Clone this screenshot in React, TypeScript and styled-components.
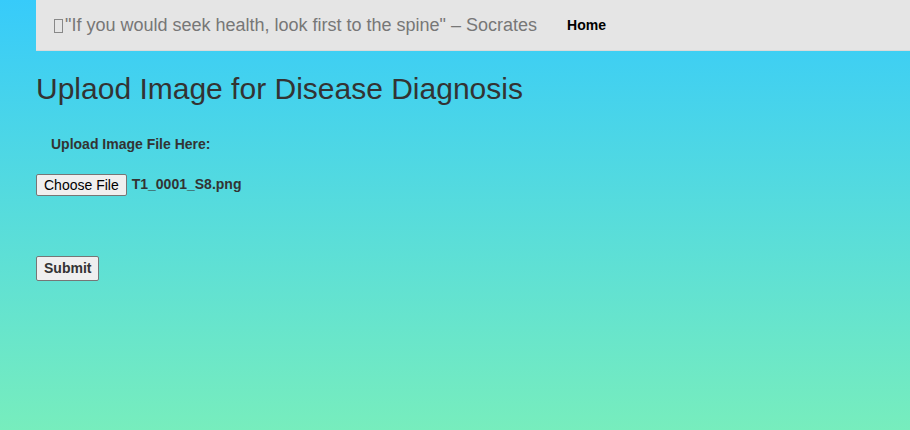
import React from "react";
import styled, { createGlobalStyle } from "styled-components";

const Global = createGlobalStyle`
  html, body { margin: 0; padding: 0; }
  body {
    min-height: 430px;
    font-family: "Liberation Sans", Arial, sans-serif;
    font-size: 14px;
    line-height: 1.42857;
    color: #333;
    background: linear-gradient(to bottom, #37cbfa 0%, #77edbd 100%);
  }
`;

const Page = styled.div`
  min-height: 430px;
  padding-left: 36px;
  box-sizing: border-box;
`;

const Navbar = styled.nav`
  height: 51px;
  background: #e5e5e5;
  border-bottom: 1px solid #dadada;
  box-sizing: border-box;
  display: flex;
  align-items: center;
  padding-left: 18px;
  padding-top: 2px;
`;

const Quote = styled.span`
  font-size: 18px;
  color: #777;
  display: flex;
  align-items: center;
`;

const Tofu = styled.span`
  display: inline-block;
  width: 7px;
  height: 12px;
  border: 1px solid #888;
  margin-right: 2px;
`;

const NavLink = styled.a`
  margin-left: 30px;
  font-size: 14px;
  font-weight: bold;
  color: #000;
  text-decoration: none;
`;

const Title = styled.h2`
  font-size: 30px;
  font-weight: 500;
  line-height: 1.1;
  margin: 21px 0 0;
  color: #333;
`;

const Form = styled.form`
  display: flex;
  flex-direction: column;
  align-items: flex-start;
`;

const Label = styled.label`
  font-size: 14px;
  font-weight: bold;
  padding-left: 15px;
  margin-top: 30px;
`;

const FileRow = styled.div`
  display: flex;
  align-items: center;
  gap: 5px;
  margin-top: 19px;
`;

const NativeButton = styled.button<{ $bold?: boolean }>`
  font-family: "Liberation Sans", Arial, sans-serif;
  font-size: 14px;
  font-weight: ${(p) => (p.$bold ? "bold" : "normal")};
  color: ${(p) => (p.$bold ? "#333" : "#000")};
  background: #efefef;
  border: 1px solid #767676;
  border-radius: 2px;
  padding: ${(p) => (p.$bold ? "3px 7px" : "2px 7px")};
  line-height: ${(p) => (p.$bold ? "17px" : "16px")};
  cursor: pointer;
`;

const FileName = styled.span`
  font-size: 14px;
  font-weight: bold;
  color: #333;
`;

const SubmitWrap = styled.div`
  margin-top: 60px;
`;

export default function App() {
  return (
    <>
      <Global />
      <Page>
        <Navbar>
          <Quote>
            <Tofu />
            "If you would seek health, look first to the spine" – Socrates
          </Quote>
          <NavLink href="#">Home</NavLink>
        </Navbar>
        <Title>Uplaod Image for Disease Diagnosis</Title>
        <Form onSubmit={(e) => e.preventDefault()}>
          <Label>Upload Image File Here:</Label>
          <FileRow>
            <NativeButton type="button">Choose File</NativeButton>
            <FileName>T1_0001_S8.png</FileName>
          </FileRow>
          <SubmitWrap>
            <NativeButton type="submit" $bold>
              Submit
            </NativeButton>
          </SubmitWrap>
        </Form>
      </Page>
    </>
  );
}
